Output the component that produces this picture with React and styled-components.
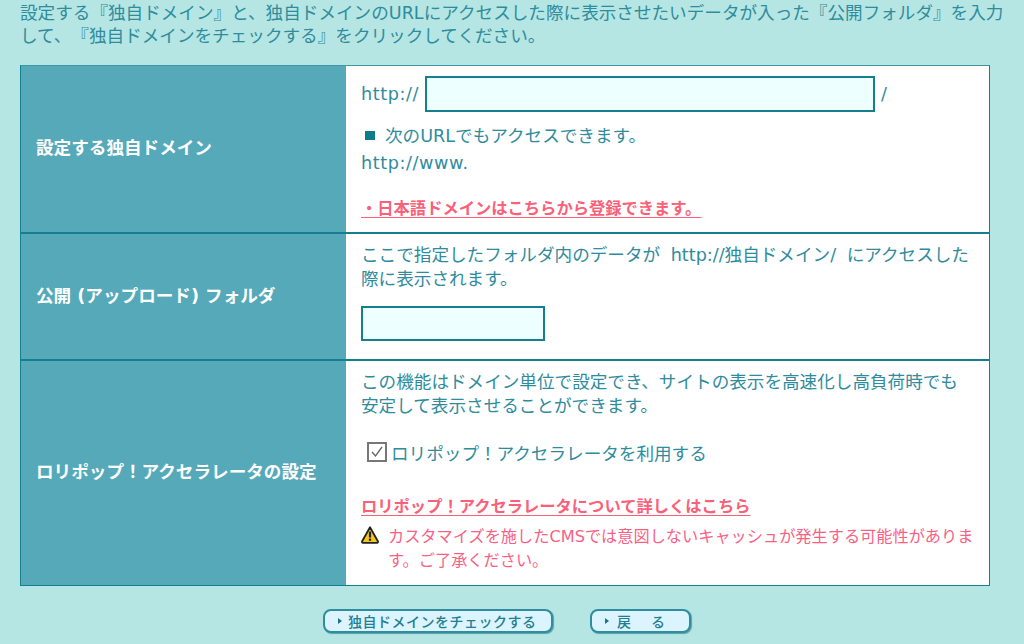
import React from 'react';
import styled, { createGlobalStyle } from 'styled-components';

const GlobalStyle = createGlobalStyle`
  html, body {
    margin: 0;
    padding: 0;
    height: 644px;
    overflow: hidden;
    background: #b5e6e3;
  }
  body {
    font-family: "DejaVu Sans", "Noto Sans CJK JP", sans-serif;
    font-size: 17.6px;
    color: #2f8c9d;
    text-spacing-trim: space-all;
  }
`;

const Page = styled.div`
  height: 644px;
  padding: 0 20px;
  box-sizing: border-box;
  overflow: hidden;
`;

const Intro = styled.p`
  margin: 0;
  padding-top: 2px;
  line-height: 23px;
  height: 65px;
  box-sizing: border-box;
`;

const Form = styled.div`
  width: 970px;
  box-sizing: border-box;
  border: 1px solid #137f8f;
  border-top-color: #3f98a6;
  background: #fff;
`;

const Row = styled.div`
  display: grid;
  grid-template-columns: 325px 1fr;
  height: ${p => p.$h}px;
  box-sizing: border-box;
  border-top: ${p => (p.$first ? 0 : 2)}px solid #137f8f;
`;

const Label = styled.div`
  background: #55a9b8;
  color: #fff;
  font-weight: 700;
  line-height: 24px;
  display: flex;
  align-items: center;
  padding: 0 0 2px 15px;
`;

const Cell = styled.div`
  padding: ${p => p.$top}px 15px 0 15px;
  line-height: 24px;
`;

const Latin = styled.span`
  letter-spacing: 0.6px;
`;

const FolderText = styled.div`
  word-spacing: 5px;
`;

const InputRow = styled.div`
  display: flex;
  align-items: center;
  gap: 6px;
  height: 36px;
`;

const TextBox = styled.div`
  width: ${p => p.$w}px;
  height: ${p => p.$hh}px;
  box-sizing: border-box;
  border: 2px solid #137f8f;
  background: #eeffff;
  margin-top: ${p => p.$mt || 0}px;
`;

const Note = styled.div`
  margin-top: ${p => p.$mt || 0}px;
  line-height: 27px;
`;

const Square = styled.span`
  display: inline-block;
  width: 10px;
  height: 9px;
  background: #0f7a8c;
  margin: 0 10px 2px 4px;
`;

const RedLink = styled.a`
  display: block;
  width: fit-content;
  color: #fb6079;
  font-weight: 700;
  font-size: 16.3px;
  line-height: 24px;
  text-decoration: underline;
  text-underline-offset: 3px;
  margin-top: ${p => p.$mt}px;
`;

const CheckRow = styled.label`
  display: flex;
  align-items: center;
  margin: 24px 0 0 6px;
  height: 24px;
`;

const Warning = styled.div`
  display: flex;
  align-items: flex-start;
  gap: 9px;
  margin-top: 6px;
  color: #fb5f85;
  font-size: 16.2px;
  line-height: 24px;
`;

const Buttons = styled.div`
  display: flex;
  justify-content: center;
  gap: 37px;
  margin-top: 23px;
  padding-right: 10px;
`;

const Btn = styled.div`
  width: ${p => p.$w}px;
  height: 24px;
  box-sizing: border-box;
  border: 2px solid #2e8d9e;
  border-radius: 8px;
  background: #dcf4ff;
  box-shadow: 1px 1px 1px #5a9fa8;
  color: #237f90;
  font-size: 14px;
  letter-spacing: 0.5px;
  font-weight: 500;
  display: flex;
  align-items: center;
  padding-left: 13px;
  gap: ${p => p.$gap}px;
  white-space: pre;
`;

const Arrow = styled.span`
  width: 0;
  height: 0;
  border-left: 4px solid #1d7485;
  border-top: 3.5px solid transparent;
  border-bottom: 3.5px solid transparent;
`;

function CheckIcon() {
  return (
    <svg width="20" height="20" viewBox="0 0 20 20" style={{ flex: 'none', margin: '-5px 4px 0 0' }}>
      <rect x="1" y="1" width="18" height="18" fill="#fff" stroke="#777" strokeWidth="2" />
      <path d="M5 10l3.5 4L15 5" fill="none" stroke="#666" strokeWidth="1.3" />
    </svg>
  );
}

function WarnIcon() {
  return (
    <svg width="18" height="18" viewBox="0 0 18 18" style={{ flex: 'none', marginTop: 1 }}>
      <path d="M9 1.2L17 15.5a1 1 0 0 1-.9 1.3H1.9a1 1 0 0 1-.9-1.3z" fill="#f2c81d" stroke="#222" strokeWidth="1.8" strokeLinejoin="round" />
      <path d="M9 5.5v6" stroke="#222" strokeWidth="2.2" />
      <rect x="7.9" y="12.6" width="2.2" height="2.2" fill="#222" />
    </svg>
  );
}

export default function App() {
  return (
    <Page>
      <GlobalStyle />
      <Intro>
        設定する『独自ドメイン』と、独自ドメインのURLにアクセスした際に表示させたいデータが入った『公開フォルダ』を入力して、『独自ドメインをチェックする』をクリックしてください。
      </Intro>
      <Form>
        <Row $first $h={166}>
          <Label>設定する独自ドメイン</Label>
          <Cell $top={10}>
            <InputRow>
              <Latin>http://</Latin>
              <TextBox $w={450} $hh={36} />
              <span>/</span>
            </InputRow>
            <Note $mt={11}><Square />次のURLでもアクセスできます。</Note>
            <Note><Latin>http://www.</Latin></Note>
            <RedLink $mt={20}>・日本語ドメインはこちらから登録できます。</RedLink>
          </Cell>
        </Row>
        <Row $h={127}>
          <Label>公開 (アップロード) フォルダ</Label>
          <Cell $top={9}>
            <FolderText>ここで指定したフォルダ内のデータが http://独自ドメイン/ にアクセスした際に表示されます。</FolderText>
            <TextBox $w={184} $hh={35} $mt={15} />
          </Cell>
        </Row>
        <Row $h={226}>
          <Label>ロリポップ！アクセラレータの設定</Label>
          <Cell $top={9}>
            この機能はドメイン単位で設定でき、サイトの表示を高速化し高負荷時でも安定して表示させることができます。
            <CheckRow><CheckIcon />ロリポップ！アクセラレータを利用する</CheckRow>
            <RedLink $mt={29}>ロリポップ！アクセラレータについて詳しくはこちら</RedLink>
            <Warning>
              <WarnIcon />
              <span>カスタマイズを施したCMSでは意図しないキャッシュが発生する可能性があります。ご了承ください。</span>
            </Warning>
          </Cell>
        </Row>
      </Form>
      <Buttons>
        <Btn $w={230} $gap={6}><Arrow />独自ドメインをチェックする</Btn>
        <Btn $w={101} $gap={8}><Arrow />戻　 る</Btn>
      </Buttons>
    </Page>
  );
}
